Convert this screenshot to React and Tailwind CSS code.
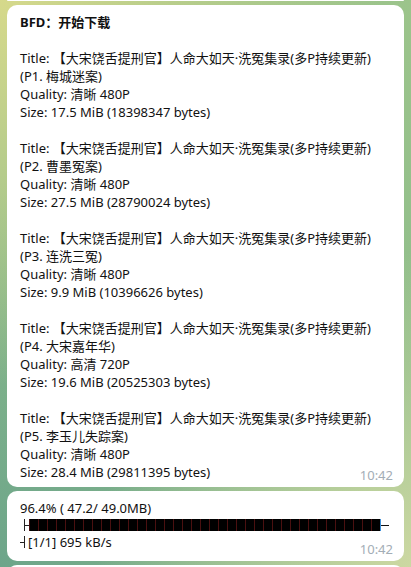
const items = [
  { part: "(P1. 梅城迷案)", quality: "清晰 480P", size: "17.5 MiB (18398347 bytes)" },
  { part: "(P2. 曹墨冤案)", quality: "清晰 480P", size: "27.5 MiB (28790024 bytes)" },
  { part: "(P3. 连洗三冤)", quality: "清晰 480P", size: "9.9 MiB (10396626 bytes)" },
  { part: "(P4. 大宋嘉年华)", quality: "高清 720P", size: "19.6 MiB (20525303 bytes)" },
  { part: "(P5. 李玉儿失踪案)", quality: "清晰 480P", size: "28.4 MiB (29811395 bytes)" },
];

const title = "Title: 【大宋饶舌提刑官】人命大如天·洗冤集录(多P持续更新)";

const Time = () => (
  <span className="absolute right-[11px] bottom-[3px] text-[13px] leading-[18px] text-[#a3adb6]">10:42</span>
);

export default function App() {
  return (
    <div className="h-[567px] w-[411px] overflow-hidden px-[7px] flex flex-col gap-[4px] font-['Noto_Sans','Noto_Sans_CJK_SC',sans-serif] text-[13px] leading-[18px] text-[#111] bg-[radial-gradient(circle_at_0%_0%,#d6d98b_0%,transparent_55%),radial-gradient(circle_at_100%_100%,#ccd8a2_0%,transparent_45%),radial-gradient(circle_at_0%_100%,#6da58a_0%,transparent_55%),radial-gradient(circle_at_100%_0%,#9cc48b_0%,transparent_60%)] bg-[#8dbc8b]">
      <div className="h-[1px] shrink-0 bg-white rounded-b-[10px]" />

      {/* download list */}
      <div className="relative shrink-0 bg-white rounded-[10px] pt-[8px] pb-[6px] px-[13px]">
        <div className="font-bold">BFD：开始下载</div>
        {items.map((it, i) => (
          <div key={i} className="pt-[18px]">
            <div>{title}</div>
            <div>{it.part}</div>
            <div>Quality: {it.quality}</div>
            <div>Size: {it.size}</div>
          </div>
        ))}
        <Time />
      </div>

      {/* progress */}
      <div className="relative shrink-0 bg-white rounded-[10px] pt-[8px] pb-[10px] px-[13px]">
        <div>96.4% ( 47.2/ 49.0MB)</div>
        <div className="flex items-center h-[16px] pl-[4px]">
          <div className="w-[1px] h-[12px] bg-[#222]" />
          <div className="w-[4px] h-[1px] bg-[#222]" />
          <div className="w-[351px] h-[12px] bg-[repeating-linear-gradient(90deg,#4a1010_0_1px,#000_1px_9px)]" />
          <div className="w-[1px] h-[12px] bg-[#3d8fd8]" />
          <div className="w-[8px] h-[1px] bg-[#111]" />
        </div>
        <div className="flex items-center">
          <div className="flex items-center h-[12px] mr-[3px]">
            <div className="w-[4px] h-[1px] bg-[#222]" />
            <div className="w-[1px] h-[12px] bg-[#222]" />
          </div>
          <span>[1/1] 695 kB/s</span>
        </div>
        <Time />
      </div>

      <div className="h-[20px] shrink-0 bg-white rounded-t-[10px]" />
    </div>
  );
}
